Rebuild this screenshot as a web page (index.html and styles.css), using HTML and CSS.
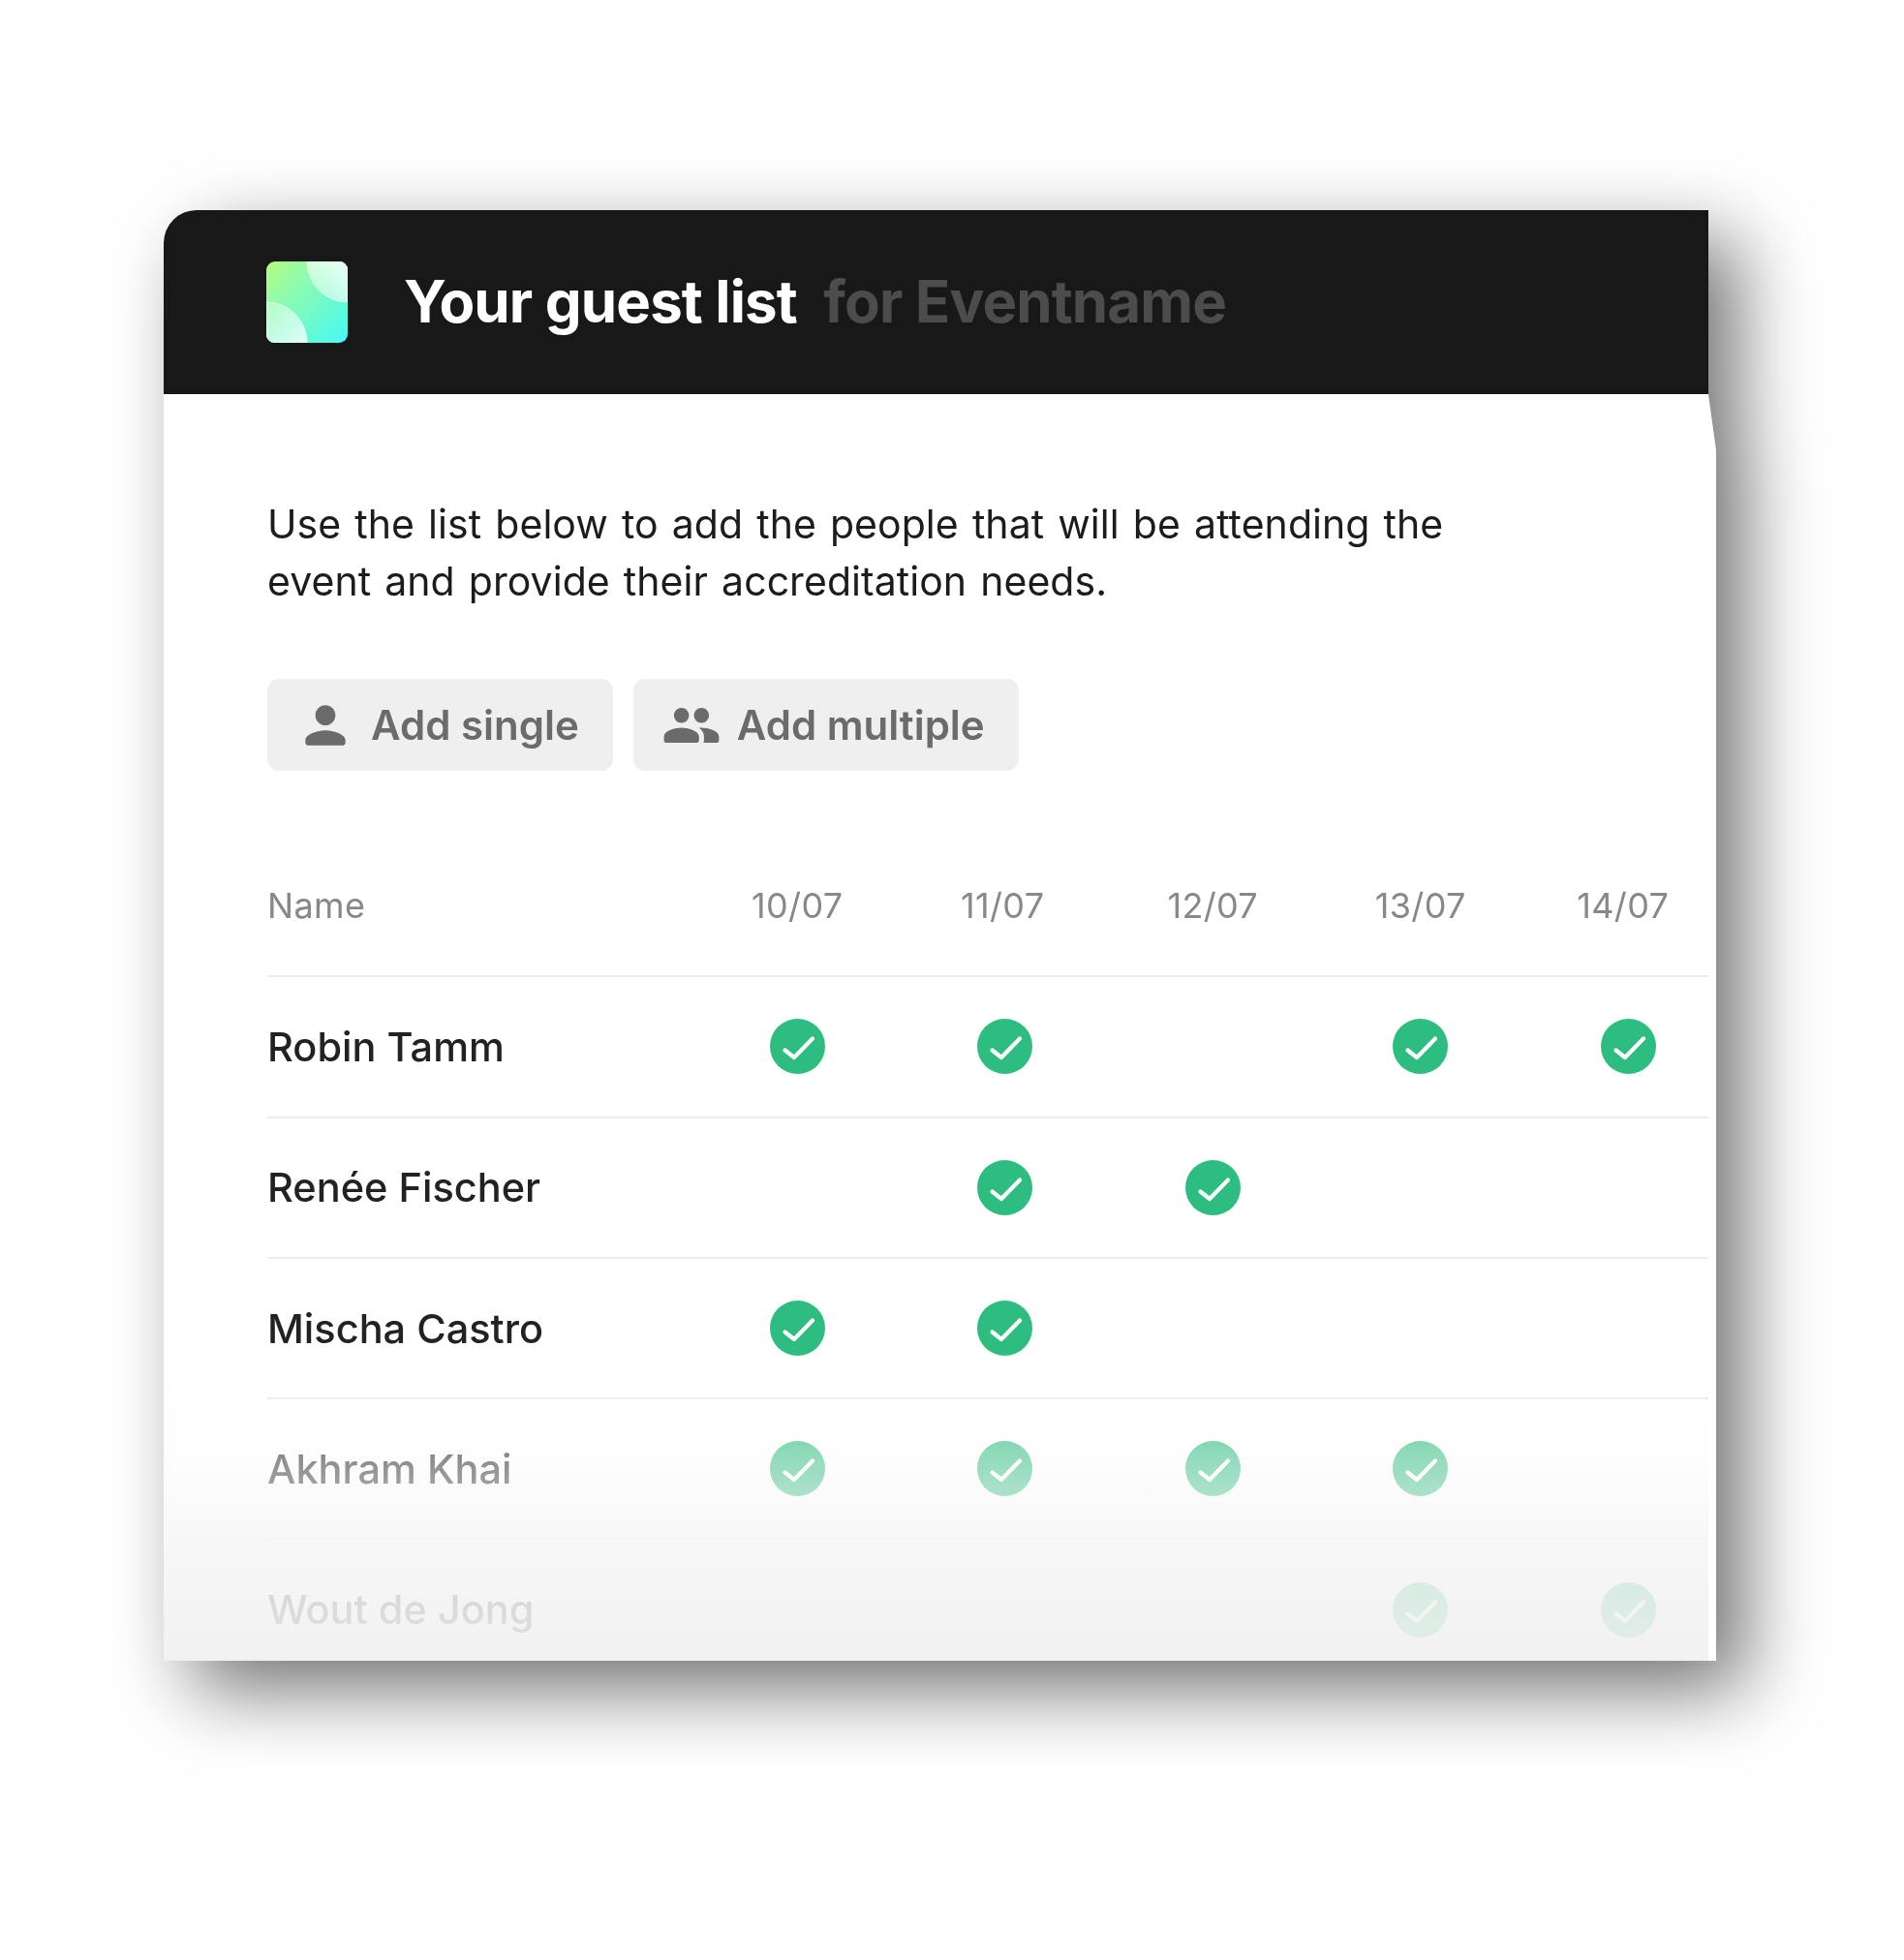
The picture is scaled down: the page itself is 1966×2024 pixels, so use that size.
FILE: index.html
```html
<!DOCTYPE html>
<html lang="en">
<head>
    <meta charset="UTF-8">
    <title>Your guest list</title>
    <link rel="stylesheet" href="styles.css">
</head>
<body>
    <div class="card">
        <header class="card-header">
            <svg class="logo" viewBox="0 0 84 84">
                <defs>
                    <linearGradient id="logo-bg" x1="0" y1="0" x2="1" y2="1">
                        <stop offset="0" stop-color="#b6fb7e"/>
                        <stop offset="0.3" stop-color="#92fbaa"/>
                        <stop offset="1" stop-color="#45f9f6"/>
                    </linearGradient>
                    <linearGradient id="logo-top" x1="0" y1="1" x2="1" y2="0">
                        <stop offset="0" stop-color="#fff" stop-opacity="0.35"/>
                        <stop offset="1" stop-color="#fff" stop-opacity="0.85"/>
                    </linearGradient>
                    <linearGradient id="logo-bottom" x1="0" y1="0" x2="1" y2="1">
                        <stop offset="0" stop-color="#fff" stop-opacity="0.3"/>
                        <stop offset="1" stop-color="#fff" stop-opacity="0.8"/>
                    </linearGradient>
                </defs>
                <rect width="84" height="84" rx="9" fill="url(#logo-bg)"/>
                <path d="M42 0a42 42 0 0 0 42 42V9a9 9 0 0 0-9-9z" fill="url(#logo-top)" stroke="#fff" stroke-opacity="0.7" stroke-width="1"/>
                <path d="M0 42a42 42 0 0 1 42 42H9a9 9 0 0 1-9-9z" fill="url(#logo-bottom)" stroke="#fff" stroke-opacity="0.7" stroke-width="1"/>
            </svg>
            <h1 class="title">Your guest list <span class="title-event">for Eventname</span></h1>
        </header>

        <main class="card-body">
            <p class="intro">Use the list below to add the people that will be attending the<br>event and provide their accreditation needs.</p>

            <div class="actions">
                <button class="btn">
                    <svg class="btn-icon" viewBox="0 0 24 24"><path d="M12 12c2.21 0 4-1.79 4-4s-1.79-4-4-4-4 1.79-4 4 1.79 4 4 4zm0 2c-2.67 0-8 1.34-8 4v1c0 .55.45 1 1 1h14c.55 0 1-.45 1-1v-1c0-2.66-5.33-4-8-4z"/></svg>
                    Add single
                </button>
                <button class="btn">
                    <svg class="btn-icon" viewBox="0 0 24 24"><path d="M16 11c1.66 0 2.99-1.34 2.99-3S17.66 5 16 5s-3 1.34-3 3 1.34 3 3 3zm-8 0c1.66 0 2.99-1.34 2.99-3S9.66 5 8 5 5 6.34 5 8s1.34 3 3 3zm0 2c-2.33 0-7 1.17-7 3.5V18c0 .55.45 1 1 1h12c.55 0 1-.45 1-1v-1.5c0-2.33-4.67-3.5-7-3.5zm8 0c-.29 0-.62.02-.97.05.02.01.03.03.04.04 1.14.83 1.93 1.94 1.93 3.41V18c0 .35-.07.69-.18 1H22c.55 0 1-.45 1-1v-1.5c0-2.33-4.67-3.5-7-3.5z"/></svg>
                    Add multiple
                </button>
            </div>

            <div class="guests">
                <svg class="sprite" width="0" height="0">
                    <symbol id="check" viewBox="0 0 57 57">
                        <circle cx="28.5" cy="28.5" r="28.5" fill="#2ebd80"/>
                        <path d="M15.500 32.500l9.500 7.500 19-19.500" fill="none" stroke="#fff" stroke-width="4.200" stroke-linecap="round" stroke-linejoin="round"/>
                    </symbol>
                </svg>

                <div class="row row-head">
                    <div class="cell-name">Name</div>
                    <div class="cell">10/07</div>
                    <div class="cell cell-narrow">11/07</div>
                    <div class="cell">12/07</div>
                    <div class="cell">13/07</div>
                    <div class="cell cell-last">14/07</div>
                </div>

                <div class="row">
                    <div class="cell-name">Robin Tamm</div>
                    <div class="cell"><svg class="tick"><use href="#check"/></svg></div>
                    <div class="cell"><svg class="tick"><use href="#check"/></svg></div>
                    <div class="cell"></div>
                    <div class="cell"><svg class="tick"><use href="#check"/></svg></div>
                    <div class="cell"><svg class="tick"><use href="#check"/></svg></div>
                </div>

                <div class="row">
                    <div class="cell-name">Renée Fischer</div>
                    <div class="cell"></div>
                    <div class="cell"><svg class="tick"><use href="#check"/></svg></div>
                    <div class="cell"><svg class="tick"><use href="#check"/></svg></div>
                    <div class="cell"></div>
                    <div class="cell"></div>
                </div>

                <div class="row">
                    <div class="cell-name">Mischa Castro</div>
                    <div class="cell"><svg class="tick"><use href="#check"/></svg></div>
                    <div class="cell"><svg class="tick"><use href="#check"/></svg></div>
                    <div class="cell"></div>
                    <div class="cell"></div>
                    <div class="cell"></div>
                </div>

                <div class="row">
                    <div class="cell-name">Akhram Khai</div>
                    <div class="cell"><svg class="tick"><use href="#check"/></svg></div>
                    <div class="cell"><svg class="tick"><use href="#check"/></svg></div>
                    <div class="cell"><svg class="tick"><use href="#check"/></svg></div>
                    <div class="cell"><svg class="tick"><use href="#check"/></svg></div>
                    <div class="cell"></div>
                </div>

                <div class="row">
                    <div class="cell-name">Wout de Jong</div>
                    <div class="cell"></div>
                    <div class="cell"></div>
                    <div class="cell"></div>
                    <div class="cell"><svg class="tick"><use href="#check"/></svg></div>
                    <div class="cell"><svg class="tick"><use href="#check"/></svg></div>
                </div>
            </div>

            <div class="fade"></div>
        </main>
    </div>
</body>
</html>
```

FILE: styles.css
```css
* {
    margin: 0;
    padding: 0;
    box-sizing: border-box;
    font-family: 'Inter', 'Liberation Sans', sans-serif;
}

body {
    background: #ffffff;
    padding: 217px 0 0 169px;
    height: 2024px;
    overflow: hidden;
}

/* the source shot is an upscaled image, hence the slight blur */
.card {
    width: 1603px;
    filter: blur(0.7px) drop-shadow(30px 30px 40px rgba(0, 0, 0, 0.55));
}

.card-header {
    width: 1595px;
    height: 190px;
    background: #181818;
    border-top-left-radius: 34px;
    padding-left: 106px;
    display: flex;
    align-items: center;
    gap: 58px;
}

.logo {
    width: 84px;
    height: 84px;
    flex-shrink: 0;
}

.title {
    font-size: 60px;
    font-weight: 700;
    color: #ffffff;
    letter-spacing: -0.87px;
    padding-bottom: 2px;
}

.title-event {
    color: #4c4c4c;
    margin-left: 14px;
}

.card-body {
    position: relative;
    height: 1308px;
    background: #ffffff;
    padding: 105px 0 0 107px;
    overflow: hidden;
    clip-path: polygon(0 0, 1595px 0, 1603px 58px, 100% 100%, 0 100%);
}

.intro {
    font-size: 41px;
    line-height: 59px;
    letter-spacing: 0.05px;
    word-spacing: 2.5px;
    color: #1c1c1c;
}

.actions {
    display: flex;
    gap: 21px;
    margin-top: 71px;
}

.btn {
    height: 95px;
    padding: 0 35px 0 29px;
    background: #efefef;
    border: none;
    border-radius: 12px;
    display: flex;
    align-items: center;
    gap: 16px;
    font-size: 42px;
    font-weight: 600;
    color: #6b6b6b;
}

.btn-icon {
    width: 62px;
    height: 62px;
    fill: #6b6b6b;
}

.guests {
    width: 1488px;
    margin-top: 68px;
}

.sprite {
    position: absolute;
}

.row {
    display: grid;
    grid-template-columns: 440px repeat(5, 214.5px);
    align-items: center;
    height: 145.3px;
    border-bottom: 2px solid #ececec;
    font-size: 41.5px;
    font-weight: 500;
    color: #222222;
}

.row-head {
    font-size: 36px;
    font-weight: 400;
    letter-spacing: 0.35px;
    color: #888888;
    padding-bottom: 2px;
}

.cell {
    display: flex;
    justify-content: center;
}

.cell-narrow {
    padding-right: 5px;
}

.cell-last {
    padding-right: 11px;
}

.tick {
    width: 57px;
    height: 57px;
    display: block;
}

.fade {
    position: absolute;
    left: 0;
    right: 8px;
    bottom: 0;
    height: 290px;
    background: linear-gradient(to bottom,
        rgba(255, 255, 255, 0) 0,
        rgba(252, 252, 252, 0.46) 72px,
        rgba(245, 245, 245, 0.84) 180px,
        rgba(240, 240, 240, 0.93) 290px);
}
```
